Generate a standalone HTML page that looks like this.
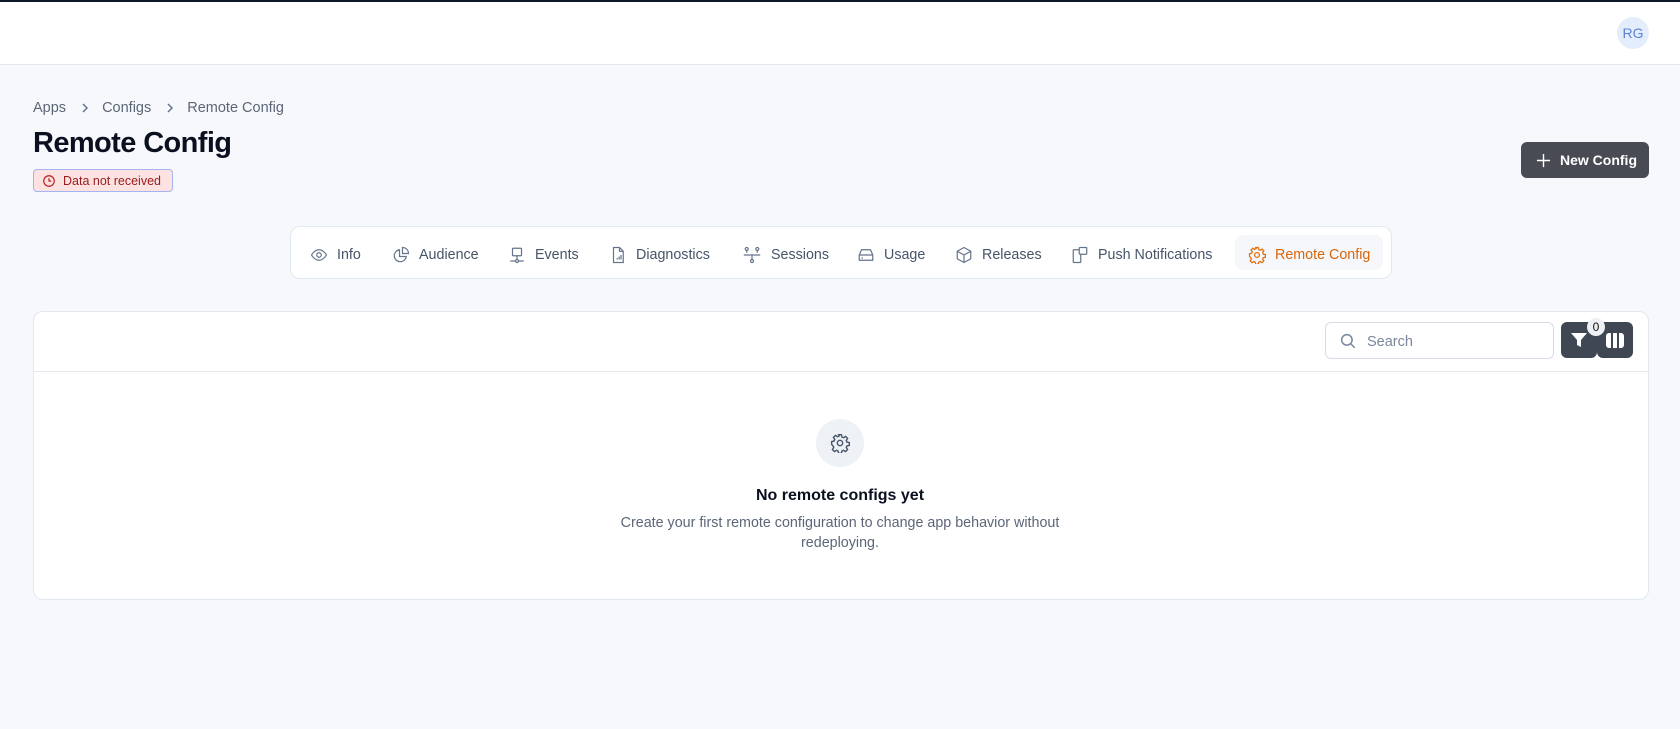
<!DOCTYPE html>
<html><head><meta charset="utf-8"><style>
*{box-sizing:border-box;margin:0;padding:0}
body{width:1680px;height:729px;background:#f7f8fb;font-family:"Liberation Sans",sans-serif;position:relative;overflow:hidden;color:#0f172a}
.a{position:absolute}
svg{display:block}
.tab{position:absolute;top:237px;height:35px;display:flex;align-items:center;font-size:14.3px;color:#475569;white-space:nowrap}
.tab svg{margin-right:9px}
</style></head><body>
<div class="a" style="left:0;top:0;width:1680px;height:65px;background:#fff;border-top:2px solid #0f172a;border-bottom:1px solid #e2e8f0"></div>
<div class="a" style="left:1617px;top:17px;width:32px;height:32px;border-radius:50%;background:#e4edfc;color:#5b82d8;font-size:14px;display:flex;align-items:center;justify-content:center">RG</div>

<div class="a" style="left:33px;top:100px;font-size:14.5px;color:#5b6678;display:flex;align-items:center">
<span>Apps</span><svg style="margin:0 12px 0 14px" width="10" height="12" viewBox="0 0 10 12" fill="none" stroke="#64748b" stroke-width="1.5"><path d="M3 2l4 4-4 4"/></svg><span>Configs</span><svg style="margin:0 12px 0 14px" width="10" height="12" viewBox="0 0 10 12" fill="none" stroke="#64748b" stroke-width="1.5"><path d="M3 2l4 4-4 4"/></svg><span>Remote Config</span></div>
<div class="a" style="left:33px;top:127px;font-size:29px;font-weight:bold;color:#0b1020;letter-spacing:-0.6px">Remote Config</div>
<div class="a" style="left:33px;top:169px;width:140px;height:23px;background:#fde2e2;border:1px solid #a5b4f0;border-radius:4px;display:flex;align-items:center;font-size:12.5px;color:#991b1b;padding-left:8px">
<svg width="14" height="14" viewBox="0 0 24 24" fill="none" stroke="#b91c1c" stroke-width="2"><circle cx="12" cy="12" r="9"/><path d="M12 7v5h4"/></svg><span style="margin-left:7px">Data not received</span></div>

<div class="a" style="left:1521px;top:142px;width:128px;height:36px;background:#484b53;border-radius:6px;color:#fff;font-size:14px;font-weight:bold;display:flex;align-items:center;padding-left:15px">
<svg width="15" height="15" viewBox="0 0 16 16" stroke="#fff" stroke-width="1.5"><path d="M8 1v14M1 8h14"/></svg><span style="margin-left:9px">New Config</span></div>

<div class="a" style="left:290px;top:226px;width:1102px;height:53px;background:#fff;border:1px solid #e2e8f0;border-radius:10px"></div>
<div class="a" style="left:1235px;top:235px;width:148px;height:35px;background:#f5f7fa;border-radius:8px"></div>
<div class="tab" style="left:310px"><svg width="18" height="18" viewBox="0 0 24 24" fill="none" stroke="#64748b" stroke-width="1.6"><path d="M2 12s4-7 10-7 10 7 10 7-4 7-10 7S2 12 2 12z"/><circle cx="12" cy="12" r="3"/></svg>Info</div>
<div class="tab" style="left:392px"><svg width="18" height="18" viewBox="0 0 24 24" fill="none" stroke="#64748b" stroke-width="1.6"><path d="M10 5a8 8 0 1 0 9 9h-9z"/><path d="M14 2v8h8a8 8 0 0 0-8-8z"/></svg>Audience</div>
<div class="tab" style="left:508px"><svg width="18" height="18" viewBox="0 0 24 24" fill="none" stroke="#64748b" stroke-width="1.6"><rect x="6" y="3" width="12" height="10" rx="1"/><path d="M12 13v5M3 20h7M14 20h7"/><circle cx="12" cy="20" r="2"/></svg>Events</div>
<div class="tab" style="left:609px"><svg width="18" height="18" viewBox="0 0 24 24" fill="none" stroke="#64748b" stroke-width="1.6"><path d="M6 2h8l5 5v15H6z"/><path d="M14 2v5h5M11 18v-2M13.5 18v-4M16 18v-6"/></svg>Diagnostics</div>
<div class="tab" style="left:742px"><svg width="20" height="18" viewBox="0 0 24 24" fill="none" stroke="#64748b" stroke-width="1.6"><circle cx="5" cy="4" r="2"/><circle cx="19" cy="4" r="2"/><circle cx="12" cy="20" r="2"/><path d="M5 6v3M19 6v3M1 12h22M12 12v6"/></svg>Sessions</div>
<div class="tab" style="left:857px"><svg width="18" height="18" viewBox="0 0 24 24" fill="none" stroke="#64748b" stroke-width="1.6"><path d="M3 12l3-7h12l3 7v7H3z M3 12h18"/><path d="M6 16h2"/></svg>Usage</div>
<div class="tab" style="left:955px"><svg width="18" height="18" viewBox="0 0 24 24" fill="none" stroke="#64748b" stroke-width="1.6"><path d="M12 2l9 5v10l-9 5-9-5V7z M3 7l9 5 9-5 M12 12v10"/></svg>Releases</div>
<div class="tab" style="left:1071px"><svg width="18" height="18" viewBox="0 0 24 24" fill="none" stroke="#64748b" stroke-width="1.6"><rect x="3" y="5" width="10" height="17" rx="1"/><rect x="11" y="2" width="10" height="9" rx="1" fill="#fff"/><path d="M8 19h.01"/></svg>Push Notifications</div>
<div class="tab" style="left:1248px;color:#d9650b"><svg width="18" height="18" viewBox="0 0 24 24" fill="none" stroke="#e0700e" stroke-width="1.7"><path d="M10.3 2h3.4l.6 2.8 2 .9 2.4-1.6 2.4 2.4-1.6 2.4.9 2 2.8.6v3.4l-2.8.6-.9 2 1.6 2.4-2.4 2.4-2.4-1.6-2 .9-.6 2.8h-3.4l-.6-2.8-2-.9-2.4 1.6-2.4-2.4 1.6-2.4-.9-2L2 13.7v-3.4l2.8-.6.9-2-1.6-2.4 2.4-2.4 2.4 1.6 2-.9z"/><circle cx="12" cy="12" r="3.2"/></svg>Remote Config</div>

<div class="a" style="left:33px;top:311px;width:1616px;height:289px;background:#fff;border:1px solid #e2e8f0;border-radius:10px"></div>
<div class="a" style="left:34px;top:371px;width:1614px;height:1px;background:#e5e9f0"></div>
<div class="a" style="left:1325px;top:322px;width:229px;height:37px;border:1px solid #d7dde6;border-radius:6px;background:#fff;display:flex;align-items:center;padding-left:13px;font-size:14.5px;color:#7b879a">
<svg width="18" height="18" viewBox="0 0 24 24" fill="none" stroke="#7b879a" stroke-width="2"><circle cx="10.5" cy="10.5" r="7"/><path d="M16 16l5 5"/></svg><span style="margin-left:10px;padding-top:2px">Search</span></div>
<div class="a" style="left:1561px;top:322px;width:36px;height:36px;background:#3f4753;border-radius:6px"></div>
<div class="a" style="left:1597px;top:322px;width:36px;height:36px;background:#3f4753;border-radius:6px"></div>
<svg class="a" style="left:1570px;top:331px" width="18" height="18" viewBox="0 0 18 18"><path d="M1 2h16l-6 7v7l-4-2V9z" fill="#fff"/></svg>
<svg class="a" style="left:1606px;top:333px" width="18" height="15" viewBox="0 0 18 15"><rect x="0" y="0" width="18" height="15" rx="3" fill="#fff"/><path d="M6 0v15M12 0v15" stroke="#3f4753" stroke-width="2"/></svg>
<div class="a" style="left:1587px;top:318px;width:18px;height:18px;border-radius:50%;background:#eef0f3;font-size:12px;color:#111;display:flex;align-items:center;justify-content:center">0</div>

<div class="a" style="left:816px;top:419px;width:48px;height:48px;border-radius:50%;background:#eef1f5;display:flex;align-items:center;justify-content:center">
<svg width="20" height="20" viewBox="0 0 24 24" fill="none" stroke="#475569" stroke-width="1.7"><path d="M10.3 2h3.4l.6 2.8 2 .9 2.4-1.6 2.4 2.4-1.6 2.4.9 2 2.8.6v3.4l-2.8.6-.9 2 1.6 2.4-2.4 2.4-2.4-1.6-2 .9-.6 2.8h-3.4l-.6-2.8-2-.9-2.4 1.6-2.4-2.4 1.6-2.4-.9-2L2 13.7v-3.4l2.8-.6.9-2-1.6-2.4 2.4-2.4 2.4 1.6 2-.9z"/><circle cx="12" cy="12" r="3.2"/></svg></div>
<div class="a" style="left:0;width:1680px;top:487px;text-align:center;font-size:16px;font-weight:bold;color:#0b1020">No remote configs yet</div>
<div class="a" style="left:590px;width:500px;top:513px;text-align:center;font-size:14.3px;line-height:20px;color:#5b6678">Create your first remote configuration to change app behavior without redeploying.</div>
</body></html>
